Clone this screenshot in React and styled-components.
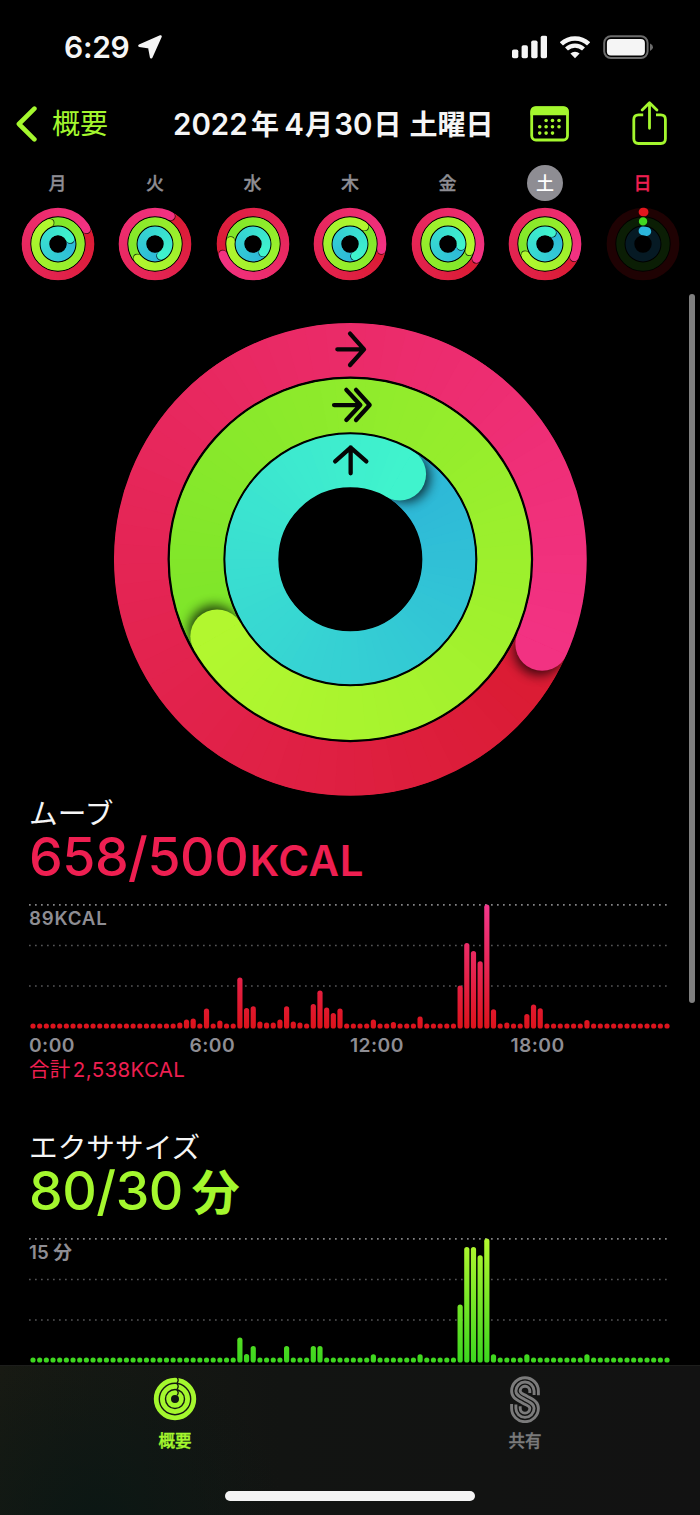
import React from 'react'
import styled, { createGlobalStyle } from 'styled-components'

const lime = '#a4f72e'
const pink = '#ee1f51'
const grey = '#8e8d93'

const GlobalStyle = createGlobalStyle`
  * { box-sizing: border-box; }
  body {
    margin: 0;
    background: #000;
    color: #f5f5f5;
    font-family: Inter, "Noto Sans CJK JP", sans-serif;
  }
`

const Screen = styled.div`
  position: relative;
  display: flex;
  flex-direction: column;
  width: 700px;
  height: 1515px;
  overflow: hidden;
  background: #000;
`

const StatusBar = styled.header`
  display: flex;
  align-items: center;
  height: 93px;
  padding: 0 46px 0 64px;
`

const Time = styled.div`
  flex: 1;
  display: flex;
  align-items: center;
  gap: 8px;
  font-size: 30px;
  font-weight: 600;
  line-height: 36px;
  letter-spacing: -0.3px;
`

const StatusIcons = styled.div`
  display: flex;
  align-items: center;
  gap: 13px;
`

const NavBar = styled.nav`
  display: grid;
  grid-template-columns: 157px 357px 1fr;
  align-items: center;
  height: 61px;
  padding-left: 16px;
`

const Back = styled.div`
  display: flex;
  align-items: center;
  gap: 14px;
  color: ${lime};
  font-size: 28px;
  font-weight: 400;
  line-height: 40px;
`

const Title = styled.h1`
  margin: 0;
  padding-top: 2px;
  display: flex;
  align-items: baseline;
  font-size: 29.5px;
  font-weight: 600;
  line-height: 40px;
  white-space: nowrap;
`

const TitlePart = styled.span`
  font-size: ${(p) => (p.$kanji ? '28px' : '29.5px')};
  margin-right: ${(p) => p.$gap || 0}px;
`

const NavActions = styled.div`
  display: flex;
  justify-content: space-between;
  padding: 0 33px 0 0;
`

const Week = styled.div`
  display: grid;
  grid-template-columns: repeat(7, 97.5px);
  justify-content: center;
  height: 168px;
  padding-top: 11px;
`

const Day = styled.div`
  display: flex;
  flex-direction: column;
  align-items: center;
  gap: 6px;
`

const DayName = styled.span`
  width: 36px;
  height: 36px;
  border-radius: 50%;
  text-align: center;
  font-size: 18px;
  font-weight: 500;
  line-height: 37px;
  -webkit-text-stroke: ${(p) => (p.$active ? 0 : 0.3)}px;
  color: ${(p) => (p.$active ? '#fff' : p.$sunday ? pink : grey)};
  background: ${(p) => (p.$active ? grey : 'transparent')};
`

const Hero = styled.div`
  display: flex;
  justify-content: center;
  height: 475px;
`

const Section = styled.section`
  height: 334px;
  padding: 0 29px;
`

const Name = styled.h2`
  margin: 0;
  height: 33px;
  font-size: 28.7px;
  font-weight: 400;
  line-height: 34px;
`

const Value = styled.div`
  display: flex;
  align-items: baseline;
  height: 54px;
  line-height: 54px;
  font-size: 53.6px;
  font-weight: 500;
  letter-spacing: -0.5px;
  color: ${(p) => p.$color};
`

const Unit = styled.span`
  margin-left: ${(p) => (p.$kanji ? 9 : 1.5)}px;
  font-size: ${(p) => (p.$kanji ? 48 : 42)}px;
  font-weight: ${(p) => (p.$kanji ? 700 : 600)};
  letter-spacing: 0.5px;
`

const ChartBox = styled.div`
  position: relative;
  height: 126px;
  margin-top: 20px;
`

const Peak = styled.span`
  position: absolute;
  left: 0;
  top: 2px;
  font-size: 18.7px;
  font-weight: 600;
  line-height: 25px;
  letter-spacing: ${(p) => (p.$wide ? 0.8 : 0)}px;
  color: ${grey};
`

const Axis = styled.div`
  display: grid;
  grid-template-columns: repeat(4, 160.5px);
  height: 29px;
  line-height: 30px;
  font-size: 19.3px;
  font-weight: 600;
  letter-spacing: 0.4px;
  color: ${grey};
`

const Total = styled.div`
  height: 22px;
  line-height: 22px;
  font-size: 20.5px;
  letter-spacing: 0.35px;
  word-spacing: -4px;
  color: ${pink};
`

const Content = styled.main`
  height: 568px;
  overflow: hidden;
`

const ScrollThumb = styled.div`
  position: absolute;
  left: 689px;
  top: 294px;
  width: 6px;
  height: 709px;
  border-radius: 3px;
  background: #7f7f7f;
`

const TabBar = styled.footer`
  display: flex;
  flex-direction: column;
  height: 150px;
  border-top: 1px solid #1d1e1c;
  background:
    radial-gradient(circle at 14% 108%, #0b1714 0, transparent 30%),
    linear-gradient(90deg, #181a13, #121412 40%, #121212);
`

const Tabs = styled.div`
  display: grid;
  grid-template-columns: 1fr 1fr;
  height: 125px;
  padding-top: 9px;
`

const Tab = styled.div`
  display: flex;
  flex-direction: column;
  align-items: center;
  gap: 6px;
  font-size: 16.5px;
  font-weight: 500;
  line-height: 24px;
  -webkit-text-stroke: 0.4px;
  color: ${(p) => (p.$active ? lime : '#7b7b7b')};
`

const HomeBar = styled.div`
  align-self: center;
  width: 250px;
  height: 10px;
  border-radius: 5px;
  background: #f4f4f4;
`

const palette = {
  move: { from: [218, 27, 50], to: [242, 50, 130], dim: '#1f0203', dot: '#e0161d' },
  exercise: { from: [126, 229, 42], to: [178, 247, 47], dim: '#0b1e05', dot: '#41d81f' },
  stand: { from: [45, 182, 216], to: [64, 243, 205], dim: '#061a24', dot: '#2bb5db' },
}

const polar = (r, deg) => {
  const a = (deg * Math.PI) / 180
  return [r * Math.sin(a), -r * Math.cos(a)]
}

const arc = (r, a, b) => {
  const [x1, y1] = polar(r, a)
  const [x2, y2] = polar(r, b)
  return `M${x1.toFixed(3)} ${y1.toFixed(3)}A${r} ${r} 0 0 1 ${x2.toFixed(3)} ${y2.toFixed(3)}`
}

const mix = (a, b, t) => `rgb(${a.map((v, i) => Math.round(v + (b[i] - v) * t)).join(',')})`

// a full lap of activity, the newest end lies over the oldest one
function Lap({ id, kind, r, w, end, shade }) {
  const { from, to } = palette[kind]
  const steps = 72
  const step = 360 / steps
  // each piece runs on under the next ones so no seam shows between them
  const seg = (i) => (
    <path
      key={i}
      d={arc(r, end + i * step, end + Math.min(i + 5, steps) * step)}
      stroke={mix(from, to, i / (steps - 1))}
      strokeWidth={w}
      fill="none"
    />
  )
  const [cx, cy] = polar(r, end)
  const [sx, sy] = polar(r, end + (w * 7) / r)
  const all = Array.from({ length: steps }, (_, i) => i)
  return (
    <g>
      <mask id={id} maskUnits="userSpaceOnUse" x={-r - w} y={-r - w} width={2 * (r + w)} height={2 * (r + w)}>
        <circle r={r} stroke="#fff" strokeWidth={w} fill="none" />
      </mask>
      <filter id={id + 'f'} x="-60%" y="-60%" width="220%" height="220%">
        <feGaussianBlur stdDeviation={shade} />
      </filter>
      <g mask={`url(#${id})`}>
        {all.map(seg)}
        <circle cx={sx} cy={sy} r={w / 2 - shade * 0.3} fill="#000" opacity="0.75" filter={`url(#${id}f)`} />
        <circle cx={cx} cy={cy} r={w / 2} fill={mix(from, to, 1)} />
        {all.slice(-14).map(seg)}
      </g>
    </g>
  )
}

function Rings({ id, laps, big, started }) {
  const radii = big
    ? [[209.6, 53.6], [153.8, 53.6], [98.5, 53]]
    : [[32, 8.7], [22.6, 8.3], [13.1, 8.8]]
  const kinds = ['move', 'exercise', 'stand']
  const half = big ? 237 : 37
  const shift = big ? 0.35 : 0
  return (
    <svg
      width={half * 2}
      height={half * 2}
      viewBox={`${-half - shift} ${-half - shift} ${half * 2} ${half * 2}`}
    >
      {kinds.map((kind, i) => {
        const [r, w] = radii[i]
        if (started) {
          return (
            <g key={kind} fill="none" strokeWidth={w}>
              <circle r={r} stroke={palette[kind].dim} />
              <path d={arc(r, 0, laps[i])} stroke={palette[kind].dot} strokeLinecap="round" />
            </g>
          )
        }
        return <Lap key={kind} id={id + kind} kind={kind} r={r} w={w} end={laps[i]} shade={big ? 6 : 0.7} />
      })}
      {big && (
        <g fill="none" stroke="#050505" strokeWidth="4.3" strokeLinecap="round" strokeLinejoin="round">
          <path d="M-13-210H13.5M-.3-225.7L13.7-210L-.3-194.3" />
          <path d="M-16.3-154.3H10M-4-169.5L10-154.3L-4-139.3M5.7-169.5L19.3-154.3L5.7-139.3" />
          <path d="M.3-86V-112M-15.2-98L.3-111.7L16-98" />
        </g>
      )}
    </svg>
  )
}

const days = [
  { name: '月', laps: [62, 338, 66] },
  { name: '火', laps: [29, 230, 151] },
  { name: '水', laps: [250, 277, 128] },
  { name: '木', laps: [100, 39, 156] },
  { name: '金', laps: [117, 108, 97] },
  { name: '土', laps: [113.8, 240, 30], active: true },
  { name: '日', laps: [2, 0.3, 17], sunday: true },
]

const moveBars = {
  22: 6, 23: 9, 24: 10, 26: 20, 28: 8, 31: 51, 32: 20.7, 33: 22.3, 34: 7, 35: 6, 36: 6, 37: 9, 38: 22.3,
  39: 7, 40: 6, 42: 24.7, 43: 38, 44: 21, 45: 15.7, 46: 20, 51: 9, 54: 6.5, 58: 12, 64: 43, 65: 85.7,
  66: 77.7, 67: 67.3, 68: 124, 69: 19.3, 71: 6, 74: 14.7, 75: 24, 76: 20.3, 83: 8.7,
}

const exerciseBars = {
  31: 25, 32: 8.5, 33: 16.7, 38: 16.7, 42: 16.7, 43: 16.7, 51: 8.3, 58: 8.3, 64: 58, 65: 115.7,
  66: 115.7, 67: 107.3, 68: 124, 69: 8.3, 74: 8.3, 83: 8.3,
}

function Chart({ id, bars, top, bottom }) {
  return (
    <svg width="642" height="126" viewBox="0 0 642 126">
      <linearGradient id={id} gradientUnits="userSpaceOnUse" x1="0" y1="0" x2="0" y2="125">
        <stop offset="0" stopColor={top} />
        <stop offset="1" stopColor={bottom} />
      </linearGradient>
      <line x1="0" x2="642" y1="0.9" y2="0.9" stroke="#838385" strokeWidth="1.7" strokeDasharray="1.7 4.3" />
      <line x1="0" x2="642" y1="41.4" y2="41.4" stroke="#545456" strokeWidth="1.5" strokeDasharray="1.7 4.3" />
      <line x1="0" x2="642" y1="82" y2="82" stroke="#545456" strokeWidth="1.5" strokeDasharray="1.7 4.3" />
      {Array.from({ length: 96 }, (_, i) => {
        const h = bars[i] || 5.2
        return (
          <rect key={i} x={1.4 + i * 6.674} y={124.6 - h} width="5.2" height={h} rx="2.6" fill={`url(#${id})`} />
        )
      })}
    </svg>
  )
}

const LocationIcon = () => (
  <svg width="26" height="26" viewBox="0 0 26 26">
    <path d="M23.5 2.5L2.5 11.8L12.3 13.2L14.2 23.3Z" fill="#f5f5f5" stroke="#f5f5f5" strokeWidth="2.6" strokeLinejoin="round" />
  </svg>
)

const SignalIcon = () => (
  <svg width="35.2" height="24" viewBox="0 0 35.2 24" fill="#f5f5f5">
    <rect x="0" y="14.5" width="6.3" height="8.7" rx="1.8" />
    <rect x="9.6" y="10.2" width="6.3" height="13" rx="1.8" />
    <rect x="19.2" y="5.5" width="6.4" height="17.7" rx="1.8" />
    <rect x="28.7" y="0.7" width="6.5" height="22.5" rx="1.8" />
  </svg>
)

const WifiIcon = () => (
  <svg width="30" height="24" viewBox="0 0 30 24">
    <g fill="none" stroke="#f5f5f5">
      <path d="M1.4 8.9A19.8 19.8 0 0 1 28.6 8.9" strokeWidth="4.6" />
      <path d="M6.5 14A12.4 12.4 0 0 1 23.5 14" strokeWidth="4.3" />
    </g>
    <path d="M15 23.3L10.4 18.5A6.7 6.7 0 0 1 19.6 18.5Z" fill="#f5f5f5" />
  </svg>
)

const BatteryIcon = () => (
  <svg width="51" height="24" viewBox="0 0 51 24">
    <rect x="1.2" y="1.3" width="43.4" height="21.6" rx="6.6" fill="none" stroke="#6c6c6c" strokeWidth="2" />
    <rect x="3.9" y="4" width="38" height="16.4" rx="4" fill="#f5f5f5" />
    <path d="M47 8.5Q50 9.8 50 12.2Q50 14.7 47 16Z" fill="#6c6c6c" />
  </svg>
)

const ChevronIcon = () => (
  <svg width="22" height="36" viewBox="0 0 22 36">
    <path d="M18.4 2.7L2.9 18L18.4 33.3" fill="none" stroke={lime} strokeWidth="4.6" strokeLinecap="round" strokeLinejoin="round" />
  </svg>
)

const calendarDots = [[16.1, 14.5], [22.5, 14.5], [29, 14.5], [9.7, 20.8], [16.1, 20.8], [22.5, 20.8], [29, 20.8], [9.7, 27.1], [16.1, 27.1], [22.5, 27.1]]

const CalendarIcon = () => (
  <svg width="39" height="46" viewBox="0 -5 39 46">
    <rect x="1.7" y="1.7" width="35.8" height="32.3" rx="4.2" fill="none" stroke={lime} strokeWidth="2.8" />
    <path d="M.5 9.3V5.5Q.5.5 5.5.5H33.7Q38.7.5 38.7 5.5V9.3Z" fill={lime} />
    {calendarDots.map(([x, y]) => (
      <circle key={x + '-' + y} cx={x} cy={y} r="1.8" fill={lime} />
    ))}
  </svg>
)

const ShareIcon = () => (
  <svg width="36" height="46" viewBox="0 .7 36 46">
    <g fill="none" stroke={lime} strokeWidth="2.8" strokeLinecap="round" strokeLinejoin="round">
      <path d="M12.2 14.5H7.5Q2.8 14.5 2.8 19.2V38.5Q2.8 43.2 7.5 43.2H29.8Q34.4 43.2 34.4 38.5V19.2Q34.4 14.5 29.8 14.5H25" strokeLinecap="butt" />
      <path d="M18.5 28V2.6M11.2 9.8L18.5 2.5L25.9 9.8" />
    </g>
  </svg>
)

const SummaryIcon = () => (
  <svg width="44" height="48" viewBox="-22 -24 44 48">
    <g fill="none" stroke={lime} strokeWidth="4.8">
      <circle r="18.8" />
      <circle r="12.6" />
      <circle r="6.4" />
    </g>
    <g fill="none" stroke="#10130d" strokeWidth="1.3">
      <path d="M2-21.6Q4.4-18.8 2-16" />
      <path d="M2-15.3Q4.4-12.5 2-9.8" />
      <path d="M2-9Q4.4-6.3 2-3.6" />
    </g>
  </svg>
)

const SharingIcon = () => (
  <svg width="32" height="48" viewBox="0 -.5 32 48">
    <g fill="none" stroke="#7b7b7b" strokeWidth="2.9">
      <path d="M29.4 19.8V15.6A13.4 13.4 0 0 0 2.6 15.6C2.6 22.2 7.5 24.1 13.85 27.7C18 30 20.8 30.4 20.8 32.8A4.8 4.8 0 0 1 11.2 32.8V30.8" />
      <path d="M25.1 19.4V15.6A9.1 9.1 0 0 0 6.9 15.6C6.9 20 11 21.3 16 24.2C21 27.1 25.1 28.4 25.1 32.8A9.1 9.1 0 0 1 6.9 32.8V29" />
      <path d="M20.8 17.6V15.6A4.8 4.8 0 0 0 11.2 15.6C11.2 18 14 18.4 18.15 20.7C24.5 24.3 29.4 26.2 29.4 32.8A13.4 13.4 0 0 1 2.6 32.8V28.6" />
    </g>
  </svg>
)

function App() {
  return (
    <Screen>
      <GlobalStyle />
      <StatusBar>
        <Time>
          6:29
          <LocationIcon />
        </Time>
        <StatusIcons>
          <SignalIcon />
          <WifiIcon />
          <BatteryIcon />
        </StatusIcons>
      </StatusBar>
      <NavBar>
        <Back>
          <ChevronIcon />
          概要
        </Back>
        <Title>
          <TitlePart $gap={3.5}>2022</TitlePart>
          <TitlePart $kanji $gap={5}>年</TitlePart>
          <TitlePart $gap={1.2}>4</TitlePart>
          <TitlePart $kanji $gap={1.2}>月</TitlePart>
          <TitlePart $gap={1}>30</TitlePart>
          <TitlePart $kanji $gap={8}>日</TitlePart>
          <TitlePart $kanji>土曜日</TitlePart>
        </Title>
        <NavActions>
          <CalendarIcon />
          <ShareIcon />
        </NavActions>
      </NavBar>
      <Week>
        {days.map((d, i) => (
          <Day key={d.name}>
            <DayName $active={d.active} $sunday={d.sunday}>{d.name}</DayName>
            <Rings id={'d' + i} laps={d.laps} started={d.sunday} />
          </Day>
        ))}
      </Week>
      <Hero>
        <Rings id="hero" laps={[113.8, 240, 30]} big />
      </Hero>
      <Content>
        <Section>
          <Name>ムーブ</Name>
          <Value $color={pink}>
            658/500<Unit>KCAL</Unit>
          </Value>
          <ChartBox>
            <Chart id="moveBars" bars={moveBars} top="#f2378c" bottom="#dc131b" />
            <Peak $wide>89KCAL</Peak>
          </ChartBox>
          <Axis>
            <span>0:00</span>
            <span>6:00</span>
            <span>12:00</span>
            <span>18:00</span>
          </Axis>
          <Total>合計 2,538KCAL</Total>
        </Section>
        <Section>
          <Name>エクササイズ</Name>
          <Value $color={lime}>
            80/30<Unit $kanji>分</Unit>
          </Value>
          <ChartBox>
            <Chart id="exerciseBars" bars={exerciseBars} top="#b4f72f" bottom="#3bd61f" />
            <Peak>15 分</Peak>
          </ChartBox>
        </Section>
      </Content>
      <TabBar>
        <Tabs>
          <Tab $active>
            <SummaryIcon />
            概要
          </Tab>
          <Tab>
            <SharingIcon />
            共有
          </Tab>
        </Tabs>
        <HomeBar />
      </TabBar>
      <ScrollThumb />
    </Screen>
  )
}

export default App
